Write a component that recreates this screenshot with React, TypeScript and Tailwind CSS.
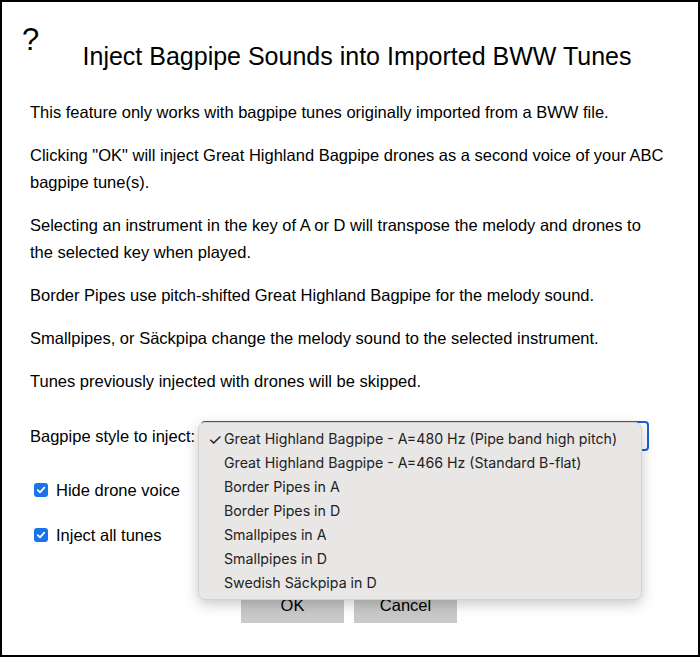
import React from 'react';

const paragraphs = [
  'This feature only works with bagpipe tunes originally imported from a BWW file.',
  'Clicking "OK" will inject Great Highland Bagpipe drones as a second voice of your ABC bagpipe tune(s).',
  'Selecting an instrument in the key of A or D will transpose the melody and drones to the selected key when played.',
  'Border Pipes use pitch-shifted Great Highland Bagpipe for the melody sound.',
  'Smallpipes, or Säckpipa change the melody sound to the selected instrument.',
  'Tunes previously injected with drones will be skipped.',
];

const options = [
  'Great Highland Bagpipe - A=480 Hz (Pipe band high pitch)',
  'Great Highland Bagpipe - A=466 Hz (Standard B-flat)',
  'Border Pipes in A',
  'Border Pipes in D',
  'Smallpipes in A',
  'Smallpipes in D',
  'Swedish Säckpipa in D',
];

const CheckBox = () => (
  <span className="flex h-[14px] w-[14px] items-center justify-center rounded-[3px] bg-[#1a73e8]">
    <svg width="10" height="10" viewBox="0 0 10 10" fill="none">
      <path d="M1.8 5.2 L4 7.4 L8.3 2.6" stroke="white" strokeWidth="1.8" strokeLinecap="round" strokeLinejoin="round" />
    </svg>
  </span>
);

export default function App() {
  return (
    <div className="relative h-[657px] w-[700px] border-2 border-black bg-white font-['Liberation_Sans',Arial,sans-serif] text-black">
      <div className="absolute left-[20px] top-[22px] text-[31px] leading-none">?</div>

      <h1 className="pl-[14px] pt-[38px] text-center text-[25px] leading-[32px]">
        Inject Bagpipe Sounds into Imported BWW Tunes
      </h1>

      <div className="mt-[27px] pl-[28px] pr-[32px] text-[16.5px] leading-[27px]">
        {paragraphs.map((p, i) => (
          <p key={i} className="mb-[16px]">{p}</p>
        ))}
      </div>

      <div className="mt-[26px] flex items-center px-[28px] text-[16.5px]">
        <span>Bagpipe style to inject:</span>
        <div className="ml-[6px] h-[30px] w-[448px] rounded-[4px] border-2 border-[#1a5fd6]" />
      </div>

      <div className="mt-[29px] flex flex-col gap-[25px] pl-[32px] text-[16.5px]">
        <label className="flex items-center gap-[8px] leading-[20px]">
          <CheckBox />
          <span>Hide drone voice</span>
        </label>
        <label className="flex items-center gap-[8px] leading-[20px]">
          <CheckBox />
          <span>Inject all tunes</span>
        </label>
      </div>

      <div className="mt-[43px] flex justify-center gap-[10px] pr-[2px]">
        <button className="h-[35px] w-[103px] bg-[#c9c9c9] text-[16.5px]">OK</button>
        <button className="h-[35px] w-[103px] bg-[#c9c9c9] text-[16.5px]">Cancel</button>
      </div>

      {/* open select menu */}
      <div className="absolute left-[196px] top-[420px] w-[444px] rounded-[7px] border border-[#d4d2d1] bg-[#e9e7e6] py-[4px] font-['Inter',sans-serif] text-[14.2px] text-[#222] shadow-[0_4px_14px_rgba(0,0,0,0.22)]">
        {options.map((o, i) => (
          <div key={i} className="flex h-[24px] items-center">
            <span className="w-[25px] pl-[9px] text-[16px]">{i === 0 ? '✓' : ''}</span>
            <span>{o}</span>
          </div>
        ))}
      </div>
    </div>
  );
}
